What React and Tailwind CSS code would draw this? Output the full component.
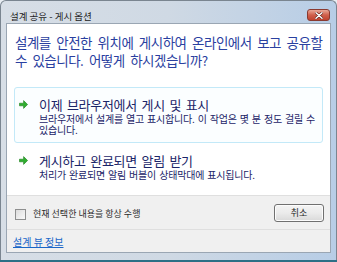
import React from 'react';

const ko = { fontFamily: '"Noto Sans CJK KR", "Noto Sans", sans-serif' };

function GreenArrow() {
  return (
    <svg width="9" height="9" viewBox="0 0 9 9">
      <path d="M0.5 3.2 H4.6 V0.6 L8.6 4.5 L4.6 8.4 V5.8 H0.5 Z" fill="#2fae2f" stroke="#1c7f1c" strokeWidth="0.6" />
    </svg>
  );
}

function CommandLink({ title, desc, boxed }) {
  return (
    <div
      className={
        'flex rounded-[3px] border pt-[8px] pb-[7px] ' +
        (boxed ? 'border-[#c3e9f8] bg-[#fbfeff]' : 'border-transparent')
      }
    >
      <div className="flex h-[17px] w-[24px] shrink-0 items-center pl-[4px]">
        <GreenArrow />
      </div>
      <div className="flex flex-col pr-[4px]">
        <div className="text-[13px] leading-[17px] tracking-[-0.3px] text-[#1b2568] [word-spacing:2px]">{title}</div>
        <div className="text-[10px] leading-[11px] tracking-[-0.2px] text-[#1b2568] [word-spacing:1px]">{desc}</div>
      </div>
    </div>
  );
}

export default function App() {
  return (
    <div className="flex h-[262px] w-[337px] flex-col bg-[#e9eef3]" style={ko}>
      <div className="flex flex-1 flex-col rounded-t-[6px] border border-b-0 border-[#7a8590] bg-gradient-to-r from-[#d7dee6] via-[#cfd9e4] to-[#b7cde6] px-[5px]">
        {/* title bar */}
        <div className="flex h-[22px] shrink-0 items-start justify-between">
          <span className="pl-[4px] pt-[9px] text-[9.5px] leading-[12px] text-[#1e1e1e]">설계 공유 - 게시 옵션</span>
          <div className="mr-[1px] mt-[8px] flex h-[12px] w-[23px] items-center justify-center rounded-[3px] border border-[#8a3a30] bg-gradient-to-b from-[#e9a898] via-[#d0604c] to-[#c0432f]">
            <svg width="8" height="7" viewBox="0 0 8 7">
              <path d="M1 0.8 L7 6.2 M7 0.8 L1 6.2" stroke="#5a1f18" strokeWidth="2.6" strokeLinecap="round" />
              <path d="M1 0.8 L7 6.2 M7 0.8 L1 6.2" stroke="#ffffff" strokeWidth="1.5" strokeLinecap="round" />
            </svg>
          </div>
        </div>

        {/* client area */}
        <div className="flex h-[230px] shrink-0 flex-col border border-[#9aa6b3] bg-[#f0f0f0]">
          <div className="flex h-[171px] flex-col bg-white px-[7px]">
            <div className="pl-[1px] pt-[9px] text-[13.5px] leading-[18px] tracking-[-0.5px] text-[#2a40a0] [word-spacing:3px]">
              설계를 안전한 위치에 게시하여 온라인에서 보고 공유할
              <br />
              수 있습니다. 어떻게 하시겠습니까?
            </div>
            <div className="mt-[18px] flex flex-col">
              <CommandLink
                boxed
                title="이제 브라우저에서 게시 및 표시"
                desc={
                  <>
                    브라우저에서 설계를 열고 표시합니다. 이 작업은 몇 분 정도 걸릴 수
                    <br />
                    있습니다.
                  </>
                }
              />
              <CommandLink
                title="게시하고 완료되면 알림 받기"
                desc="처리가 완료되면 알림 버블이 상태막대에 표시됩니다."
              />
            </div>
          </div>

          <div className="flex h-[34px] items-center justify-between border-t border-[#dfdfdf] pl-[8px] pr-[6px]">
            <label className="flex items-center gap-[7px] pt-[3px]">
              <span className="h-[11px] w-[11px] border border-[#8e8f8f] bg-gradient-to-br from-[#dcdcdc] to-[#fafafa]" />
              <span className="text-[9px] leading-[12px] text-[#2b2b2b]">현재 선택한 내용을 항상 수행</span>
            </label>
            <button className="flex h-[18px] w-[50px] items-center justify-center rounded-[3px] border border-[#707070] bg-gradient-to-b from-[#f4f4f4] via-[#ebebeb] to-[#d9d9d9] text-[9px] leading-[12px] text-[#1e1e1e] shadow-[inset_0_0_0_1px_#fcfcfc]">
              취소
            </button>
          </div>

          <div className="flex flex-1 items-center border-t border-[#dfdfdf] pl-[6px] pt-[2px]">
            <a href="#" className="text-[10px] leading-[12px] text-[#1a66c8] underline">설계 뷰 정보</a>
          </div>
        </div>
        <div className="h-[6px] shrink-0" />
      </div>
      <div className="h-[2px] shrink-0 bg-[#2d6f86]" />
    </div>
  );
}
